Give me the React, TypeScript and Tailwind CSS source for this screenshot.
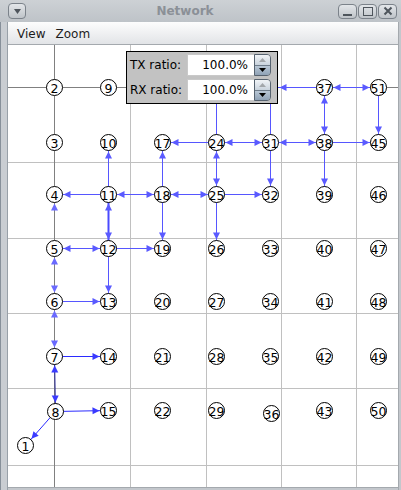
import React from "react";

type Pt = { x: number; y: number };

const cols = [54, 108, 162, 216, 270, 324, 378];
const rows = [87, 142, 194, 248, 301, 356, 410];

// node numbers run down each column, 7 per column
const nodes: Record<number, Pt> = {};
for (let c = 0; c < 7; c++) {
  for (let r = 0; r < 7; r++) {
    nodes[c * 7 + r + 2] = { x: cols[c], y: rows[r] };
  }
}
nodes[51] = nodes[44];
delete nodes[44];
nodes[1] = { x: 25, y: 445 };
nodes[8] = { x: 55, y: 411 };
nodes[36] = { x: 271, y: 413 };

// these sit under the ratio panel
const hidden = [16, 23, 30];

type Edge = { a: number; b: number; both?: boolean; kind?: "blue" | "dark" | "thick" | "none" | "navy" };

const edges: Edge[] = [
  { a: 11, b: 10 },
  { a: 11, b: 4 },
  { a: 11, b: 18, both: true },
  { a: 11, b: 12, both: true, kind: "thick" },
  { a: 12, b: 5, both: true },
  { a: 12, b: 19 },
  { a: 12, b: 13 },
  { a: 5, b: 4, kind: "none" },
  { a: 5, b: 6, both: true, kind: "none" },
  { a: 6, b: 13 },
  { a: 6, b: 7, both: true, kind: "none" },
  { a: 7, b: 8, both: true, kind: "navy" },
  { a: 7, b: 14, kind: "dark" },
  { a: 8, b: 15, kind: "dark" },
  { a: 8, b: 1, kind: "dark" },
  { a: 18, b: 17 },
  { a: 18, b: 25, both: true },
  { a: 18, b: 19 },
  { a: 24, b: 17 },
  { a: 24, b: 25, both: true },
  { a: 24, b: 31, both: true },
  { a: 24, b: 23 },
  { a: 25, b: 26 },
  { a: 25, b: 32 },
  { a: 31, b: 30 },
  { a: 31, b: 32 },
  { a: 31, b: 38, both: true },
  { a: 38, b: 45 },
  { a: 38, b: 37, both: true },
  { a: 38, b: 39 },
  { a: 37, b: 51, both: true },
  { a: 37, b: 30 },
  { a: 51, b: 45 },
];

const R = 8;

function head(from: Pt, to: Pt, color: string, key: string) {
  const dx = to.x - from.x;
  const dy = to.y - from.y;
  const len = Math.hypot(dx, dy);
  const ux = dx / len;
  const uy = dy / len;
  const tx = to.x - ux * (R + 1);
  const ty = to.y - uy * (R + 1);
  const bx = tx - ux * 7;
  const by = ty - uy * 7;
  const px = -uy * 3.5;
  const py = ux * 3.5;
  return (
    <polygon
      key={key}
      points={`${tx},${ty} ${bx + px},${by + py} ${bx - px},${by - py}`}
      fill={color}
    />
  );
}

const lineColor = {
  blue: "#5656ff",
  thick: "#4a4aff",
  dark: "#2b2bff",
  navy: "#2c2c9c",
  none: "#6a6aff",
};

const Graph: React.FC = () => (
  <svg className="absolute inset-0 w-full h-full" viewBox="8 45 390 442">
    <g transform="translate(0.5,0.5)">
      {/* grid */}
      {[130, 206, 281, 356].map((x) => (
        <line key={"v" + x} x1={x} y1={40} x2={x} y2={490} stroke="#c0c0c0" />
      ))}
      {[162, 238, 313, 388, 465].map((y) => (
        <line key={"h" + y} x1={0} y1={y} x2={400} y2={y} stroke="#c0c0c0" />
      ))}
      <line x1={54} y1={40} x2={54} y2={490} stroke="#808080" />
      <line x1={0} y1={87} x2={400} y2={87} stroke="#808080" />

      {/* links */}
      {edges.map((e, i) => {
        const k = e.kind ?? "blue";
        if (k === "none") return null;
        const p = nodes[e.a];
        const q = nodes[e.b];
        return (
          <line
            key={"e" + i}
            x1={p.x}
            y1={p.y}
            x2={q.x}
            y2={q.y}
            stroke={lineColor[k]}
            strokeWidth={k === "thick" ? 2 : 1}
          />
        );
      })}

      {/* nodes */}
      {Object.entries(nodes)
        .filter(([n]) => !hidden.includes(Number(n)))
        .map(([n, p]) => (
          <g key={"n" + n}>
            <circle cx={p.x} cy={p.y} r={R} fill="white" stroke="black" />
            <text
              x={p.x}
              y={p.y + 0.5}
              textAnchor="middle"
              dominantBaseline="central"
              fontSize={12.5}
              fontFamily="'DejaVu Sans', sans-serif"
              fill="black"
            >
              {n}
            </text>
          </g>
        ))}

      {/* arrow heads */}
      {edges.map((e, i) => {
        const k = e.kind ?? "blue";
        const c = k === "dark" || k === "navy" ? "#3a3aff" : k === "none" ? "#6a6aff" : "#5a5aff";
        const p = nodes[e.a];
        const q = nodes[e.b];
        return (
          <g key={"a" + i}>
            {head(p, q, c, "t")}
            {e.both && head(q, p, c, "f")}
          </g>
        );
      })}
    </g>
  </svg>
);

const SpinRow: React.FC<{ label: string }> = ({ label }) => (
  <div className="flex items-center h-[22px]">
    <span className="w-[57px] text-[12px] text-black">{label}</span>
    <div className="w-[67px] h-[22px] bg-white border border-[#c9c9c9] border-r-0 flex items-center justify-end pr-[6px] text-[12px] text-black">
      100.0%
    </div>
    <div className="w-[17px] h-[22px] flex flex-col rounded-r-[4px] border border-[#56626f] overflow-hidden">
      <div className="flex-1 flex items-center justify-center bg-gradient-to-b from-[#f1f4f7] to-[#c9d3dd] border-b border-[#6f7d8b]">
        <svg width="7" height="4" viewBox="0 0 7 4">
          <polygon points="3.5,0 7,4 0,4" fill="#a3a7ab" />
        </svg>
      </div>
      <div className="flex-1 flex items-center justify-center bg-gradient-to-b from-[#b9c7d5] to-[#8fa2b6]">
        <svg width="7" height="4" viewBox="0 0 7 4">
          <polygon points="0,0 7,0 3.5,4" fill="#000" />
        </svg>
      </div>
    </div>
  </div>
);

const TitleButton: React.FC<{ children: React.ReactNode }> = ({ children }) => (
  <div className="w-[19px] h-[15px] rounded-[4px] border border-[#7b828a] bg-gradient-to-b from-[#e3e6e9] to-[#bfc4c9] flex items-center justify-center">
    {children}
  </div>
);

export default function App() {
  return (
    <div
      className="w-[401px] h-[490px] flex flex-col bg-[#bfc4c9] select-none"
      style={{ fontFamily: "'DejaVu Sans', sans-serif" }}
    >
      {/* title bar */}
      <div className="h-[22px] flex items-center px-[8px] bg-gradient-to-b from-[#cdd1d5] to-[#bec3c8]">
        <div className="w-[18px] h-[16px] rounded-[4px] border border-[#7b828a] bg-gradient-to-b from-[#e3e6e9] to-[#bfc4c9] flex items-center justify-center">
          <svg width="7" height="5" viewBox="0 0 7 5">
            <polygon points="0,0 7,0 3.5,5" fill="#4e555c" />
          </svg>
        </div>
        <div className="flex-1 text-center text-[12px] font-bold text-[#8b9097] pl-[6px]">Network</div>
        <div className="flex gap-[1px] -mr-[4px]">
          <TitleButton>
            <div className="w-[9px] h-[2px] bg-[#4e555c] mt-[7px]" />
          </TitleButton>
          <TitleButton>
            <div className="w-[10px] h-[9px] border-[1.5px] border-[#4e555c]" />
          </TitleButton>
          <TitleButton>
            <svg width="10" height="10" viewBox="0 0 10 10">
              <path d="M1.5 1.5 L8.5 8.5 M8.5 1.5 L1.5 8.5" stroke="#4e555c" strokeWidth="2" />
            </svg>
          </TitleButton>
        </div>
      </div>

      {/* body */}
      <div className="flex-1 flex">
        <div className="w-[8px] border-l border-l-[#87909a] border-r border-r-[#98a0a8] bg-[#c9cdd2]" />
        <div className="flex-1 flex flex-col">
          <div className="h-[23px] flex items-center gap-[10px] pl-[9px] pt-[1px] text-[12px] text-[#1c1c1c] bg-gradient-to-b from-[#fdfdfd] to-[#e2e4e7] border-b border-[#a4a9ae]">
            <span>View</span>
            <span>Zoom</span>
          </div>
          <div className="relative flex-1 bg-white">
            <Graph />
            <div className="absolute left-[118px] top-[6px] w-[152px] h-[53px] bg-[#c2c2c2] border border-black flex flex-col gap-[3px] pt-[2px] pl-[3px]">
              <SpinRow label="TX ratio:" />
              <SpinRow label="RX ratio:" />
            </div>
          </div>
          <div className="h-[3px] bg-[#c3c7cc] border-t border-[#a4a9ae]" />
        </div>
        <div className="w-[3px] border-l border-[#a4a9ae] bg-[#c3c7cc]" />
      </div>
    </div>
  );
}
